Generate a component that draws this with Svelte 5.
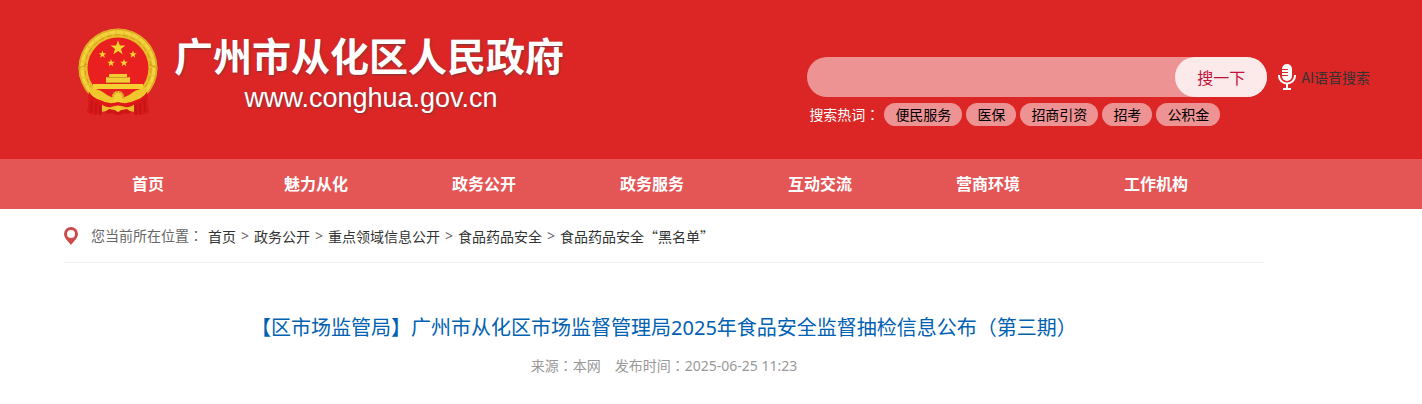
<script>
    let keyword = "";

    const hotWords = ["便民服务", "医保", "招商引资", "招考", "公积金"];
    const menu = ["首页", "魅力从化", "政务公开", "政务服务", "互动交流", "营商环境", "工作机构"];
    const crumbs = ["首页", "政务公开", "重点领域信息公开", "食品药品安全", "食品药品安全“黑名单”"];

    const star = "M0 -10 L2.4 -3.2 L9.5 -3.1 L3.8 1.2 L5.9 8.1 L0 4 L-5.9 8.1 L-3.8 1.2 L-9.5 -3.1 L-2.4 -3.2 Z";
    const stars = [
        { x: 40, y: 20, s: 0.78 },
        { x: 24.500, y: 26.500, s: 0.4 },
        { x: 55, y: 26.500, s: 0.4 },
        { x: 33, y: 35, s: 0.4 },
        { x: 46, y: 35, s: 0.4 }
    ];
</script>

<header>
    <div class="top">
        <a class="logo" href="/">
            <svg class="emblem" viewBox="0 0 80 90" aria-hidden="true">
                <!-- wreath -->
                <circle cx="40" cy="40" r="39.500" fill="#e8bd28"/>
                <circle cx="40" cy="40" r="38.500" fill="none" stroke="#d9a622" stroke-width="1"/>
                <circle cx="40" cy="40" r="36" fill="none" stroke="#f3d440" stroke-width="3" stroke-dasharray="7 1"/>
                <circle cx="40" cy="40" r="33" fill="none" stroke="#cf9e20" stroke-width="1" stroke-dasharray="5 3"/>
                <path d="M0 41 l9 -5 M80 41 l-9 -5" stroke="#c79a20" stroke-width="1"/>
                <circle cx="40" cy="40" r="30.500" fill="#e91f20"/>
                {#each stars as p}
                <path d={star} fill="#f8d630" transform="translate({p.x} {p.y}) scale({p.s})"/>
                {/each}
                <!-- gate tower -->
                <path d="M31 46 h18 v3 h3 v6 h-24 v-6 h3 z" fill="#f3cb35"/>
                <path d="M29 49.500 h22 M28 54.500 h24" stroke="#d29d25" stroke-width="1"/>
                <rect x="15" y="56" width="50" height="5" fill="#f6d033"/>
                <!-- ribbon under the gate -->
                <path d="M11 58 l5 3 q6 0 13 6 q11 7 22 0 q7 -6 13 -6 l5 -3 l-1 8 q-8 2 -11 8 q-17 7 -34 0 q-3 -6 -11 -8 z" fill="#f0c62c"/>
                <path d="M25 62 h30 l-7 5 h-16 z" fill="#e91f20"/>
                <circle cx="40" cy="69" r="6" fill="#f5cf35"/>
                <circle cx="40" cy="69" r="5" fill="none" stroke="#d39c25" stroke-width="2" stroke-dasharray="2 1"/>
                <path d="M34 71 q6 -3 12 0 l-2 4 h-8 z" fill="#f5cf35"/>
                <!-- drapes -->
                <path d="M23 77 q17 -3 34 0 v7 q-17 -4 -34 0 z" fill="#edbd2b"/>
                <path d="M11 64 q4 6 11 8 q9 5 18 2 q9 3 18 -2 q7 -2 11 -8 l1 6 q-6 5 -13 6 q-6 4 -10 3 q-7 -3 -14 0 q-4 1 -10 -3 q-7 -1 -13 -6 z" fill="#df1718"/>
                <path d="M11 64 q0 10 -2 20 q3 3 6 2 q2 2 4 0 q2 2 5 1 l0 -11 q-9 -3 -13 -12 z" fill="#d81718"/>
                <path d="M69 64 q0 10 2 20 q-3 3 -6 2 q-2 2 -4 0 q-2 2 -5 1 l0 -11 q9 -3 13 -12 z" fill="#d81718"/>
                <path d="M14 72 l-1 12 M18 75 v11 M22 77 v9 M66 72 l1 12 M62 75 v11 M58 77 v9" stroke="#b01517" stroke-width="1"/>
                <path d="M37 80 q3 -4 6 0 l-1 4 h-4 z" fill="#f0c62c"/>
                <path d="M27 84 l4 -3 5 1 4 2 4 -2 5 -1 4 3 -3 2 -4 -1 -4 2 h-4 l-4 -2 -4 1 z" fill="#cf1517"/>
            </svg>
            <span class="logo-text">
                <span class="site-name">广州市从化区人民政府</span>
                <span class="site-url">www.conghua.gov.cn</span>
            </span>
        </a>

        <div class="search">
            <div class="search-row">
                <form on:submit|preventDefault>
                    <input type="text" aria-label="搜索" bind:value={keyword}>
                    <button type="submit">搜一下</button>
                </form>
                <a class="voice" href="/voice">
                    <svg class="mic" viewBox="0 0 18 26" aria-hidden="true">
                        <rect x="4" y="0" width="10" height="17" rx="5" fill="#fff"/>
                        <path d="M4 5.500 h6 M4 8.500 h6 M4 11.500 h6" stroke="#dc2626" stroke-width="1"/>
                        <path d="M1 11 v1 a8 7.500 0 0 0 16 0 v-1" fill="none" stroke="#fff" stroke-width="2"/>
                        <path d="M9 19 v6 M5 25 h8" fill="none" stroke="#fff" stroke-width="2"/>
                    </svg>
                    AI语音搜索
                </a>
            </div>
            <div class="hot">
                <span class="hot-label">搜索热词<span class="colon">：</span></span>
                {#each hotWords as word}
                <a class="hot-word" href="/search">{word}</a>
                {/each}
            </div>
        </div>
    </div>

    <nav>
        <div class="menu">
            {#each menu as item}
            <a href="/">{item}</a>
            {/each}
        </div>
    </nav>
</header>

<main>
    <div class="crumbs">
        <svg class="pin" viewBox="0 0 14 18" aria-hidden="true">
            <path d="M7 0 a7 7 0 0 1 7 7 c0 4 -4 7 -7 11 c-3 -4 -7 -7 -7 -11 a7 7 0 0 1 7 -7 z M7 3 a4 4 0 1 0 0 8 a4 4 0 1 0 0 -8 z" fill="#cc4b4b" fill-rule="evenodd"/>
        </svg>
        <span>您当前所在位置<span class="colon">：</span></span>
        {#each crumbs as crumb, i}
        {#if i > 0}
        <span class="sep">&gt;</span>
        {/if}
        <a href="/">{crumb}</a>
        {/each}
    </div>

    <article>
        <h1>【区市场监管局】广州市从化区市场监督管理局2025年食品安全监督抽检信息公布（第三期）</h1>
        <p class="info">
            <span>来源<span class="colon">：</span>本网</span>
            <span>发布时间<span class="colon">：</span>2025-06-25 11:23</span>
        </p>
    </article>
</main>

<style>
    :global(body){
        margin: 0;
        background-color: #fff;
        font-family: "Noto Sans", "Noto Sans CJK SC", sans-serif;
        font-size: 14px;
    }
    a{
        color: inherit;
        text-decoration: none;
    }
    svg{
        display: block;
        flex: none;
    }
    .colon{
        font-family: "Noto Sans CJK TC", sans-serif;
    }
    header{
        background-color: #dc2626;
        color: #fff;
    }
    .top{
        display: flex;
        justify-content: space-between;
        align-items: flex-start;
        padding: 28px 52px 0 78px;
        min-height: 131px;
    }
    .logo{
        display: flex;
        gap: 16px;
    }
    .emblem{
        width: 80px;
        height: 90px;
    }
    .logo-text{
        display: flex;
        flex-direction: column;
        align-items: center;
        padding-top: 4px;
        text-shadow: 1px 1px 2px rgba(90, 60, 60, 0.7);
        white-space: nowrap;
    }
    .site-name{
        font-size: 39px;
        font-weight: 700;
        line-height: 48px;
    }
    .site-url{
        padding-left: 4px;
        font-family: "Liberation Sans", Arial, sans-serif;
        font-size: 27px;
        line-height: 36px;
    }
    .search{
        padding-top: 29px;
    }
    .search-row{
        display: flex;
        align-items: center;
        gap: 11px;
    }
    form{
        display: flex;
        width: 460px;
        height: 40px;
        border-radius: 20px;
        background-color: #ee9393;
    }
    input{
        flex: 1;
        min-width: 0;
        padding: 0 20px;
        border: 0;
        outline: 0;
        background: none;
        font: inherit;
    }
    button{
        width: 92px;
        padding: 0;
        border: 0;
        border-radius: 20px;
        background-color: #fce9e9;
        color: #c3113a;
        font-family: inherit;
        font-size: 16px;
        cursor: pointer;
    }
    .voice{
        display: flex;
        align-items: center;
        gap: 5px;
        color: #333;
        font-family: "Noto Sans CJK SC", sans-serif;
        line-height: 20px;
        white-space: nowrap;
    }
    .mic{
        width: 18px;
        height: 26px;
    }
    .hot{
        display: flex;
        gap: 4px;
        padding: 6px 0 0 2px;
        line-height: 23px;
    }
    .hot-label{
        margin-right: 1px;
    }
    .hot-word{
        padding: 0 11px;
        border-radius: 12px;
        background-color: #ee9393;
        color: #000;
    }
    nav{
        background-color: #e45656;
    }
    .menu{
        display: flex;
        max-width: 1200px;
        margin-left: 64px;
    }
    .menu a{
        width: 14%;
        font-size: 16px;
        font-weight: 700;
        line-height: 50px;
        text-align: center;
    }
    main{
        max-width: 1200px;
        margin-left: 64px;
    }
    .crumbs{
        display: flex;
        align-items: center;
        gap: 5px;
        height: 53px;
        border-bottom: 1px solid #eee;
        color: #666;
        line-height: 20px;
    }
    .crumbs a{
        color: #333;
        font-family: "Noto Sans CJK SC", sans-serif;
    }
    .pin{
        width: 14px;
        height: 18px;
        margin-right: 8px;
    }
    article{
        padding-top: 48px;
        text-align: center;
    }
    h1{
        margin: 0;
        color: #0061b2;
        font-size: 20px;
        font-weight: 400;
        line-height: 34px;
    }
    .info{
        display: flex;
        justify-content: center;
        gap: 14px;
        margin: 8px 0 0;
        color: #999;
        line-height: 24px;
    }
</style>
